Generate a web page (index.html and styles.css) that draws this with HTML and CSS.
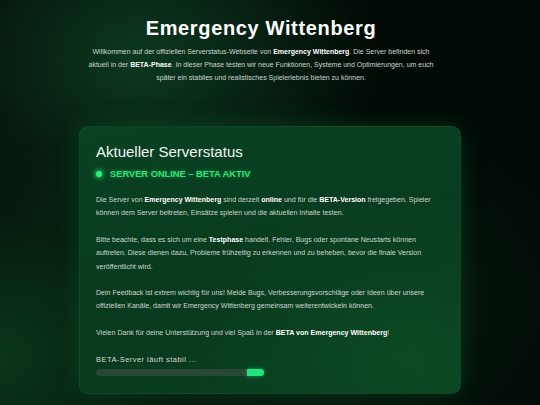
FILE: index.html
```html
<!DOCTYPE html>
<html lang="de">
<head>
<meta charset="utf-8">
<title>Emergency Wittenberg</title>
<link rel="stylesheet" href="styles.css">
</head>
<body>
<div class="page">
  <header class="hero">
    <h1 class="hero-title">Emergency Wittenberg</h1>
    <p class="hero-intro">Willkommen auf der offiziellen Serverstatus-Webseite von <b>Emergency Wittenberg</b>. Die Server befinden sich aktuell in der <b>BETA-Phase</b>. In dieser Phase testen wir neue Funktionen, Systeme und Optimierungen, um euch später ein stabiles und realistisches Spielerlebnis bieten zu können.</p>
  </header>
  <main class="card">
    <h2 class="card-title">Aktueller Serverstatus</h2>
    <div class="status"><span class="status-dot"></span><span class="status-text">SERVER ONLINE – BETA AKTIV</span></div>
    <p class="card-text">Die Server von <b>Emergency Wittenberg</b> sind derzeit <b>online</b> und für die <b>BETA-Version</b> freigegeben. Spieler können dem Server beitreten, Einsätze spielen und die aktuellen Inhalte testen.</p>
    <p class="card-text">Bitte beachte, dass es sich um eine <b>Testphase</b> handelt. Fehler, Bugs oder spontane Neustarts können auftreten. Diese dienen dazu, Probleme frühzeitig zu erkennen und zu beheben, bevor die finale Version veröffentlicht wird.</p>
    <p class="card-text">Dein Feedback ist extrem wichtig für uns! Melde Bugs, Verbesserungsvorschläge oder Ideen über unsere offiziellen Kanäle, damit wir Emergency Wittenberg gemeinsam weiterentwickeln können.</p>
    <p class="card-text">Vielen Dank für deine Unterstützung und viel Spaß in der <b>BETA von Emergency Wittenberg</b>!</p>
    <div class="progress-label">BETA-Server läuft stabil ...</div>
    <div class="progress"><div class="progress-fill"></div></div>
  </main>
</div>
</body>
</html>
```

FILE: styles.css
```css
html, body {
  margin: 0;
  padding: 0;
}
body {
  width: 540px;
  height: 405px;
  overflow: hidden;
  font-family: "Liberation Sans", Arial, sans-serif;
  color: #ffffff;
  background:
    radial-gradient(ellipse 240px 190px at 140px 60px, rgba(14, 68, 38, 0.8), rgba(14, 68, 38, 0) 100%),
    radial-gradient(ellipse 200px 220px at 0px 360px, rgba(12, 70, 34, 0.7), rgba(12, 70, 34, 0) 100%),
    radial-gradient(ellipse 320px 200px at 270px 300px, rgba(10, 60, 30, 0.55), rgba(10, 60, 30, 0) 100%),
    #020a05;
}
.page {
  display: flex;
  flex-direction: column;
  align-items: center;
}
.hero {
  display: flex;
  flex-direction: column;
  align-items: center;
  padding: 16px 18px 0 0;
  width: 522px;
  text-align: center;
}
.hero-title {
  margin: 0;
  font-size: 20px;
  line-height: 24px;
  font-weight: 700;
  letter-spacing: 0.65px;
  color: #ffffff;
}
.hero-intro {
  margin: 5px 0 0 0;
  width: 356px;
  font-size: 7px;
  line-height: 13px;
  color: #cbd5cf;
}
.hero-intro b {
  color: #ffffff;
}
.card {
  margin-top: 42px;
  width: 348px;
  padding: 16px 16px 17px 16px;
  border-radius: 9px;
  background:
    radial-gradient(ellipse 220px 160px at 330px 230px, rgba(16, 84, 42, 0.55), rgba(16, 84, 42, 0) 100%),
    linear-gradient(170deg, #0a4123 0%, #083a1d 60%, #093d1f 100%);
  box-shadow: 0 0 24px rgba(20, 120, 60, 0.3);
  border: 1px solid rgba(60, 160, 90, 0.1);
}
.card-title {
  margin: 0;
  font-size: 15px;
  line-height: 18px;
  font-weight: 400;
  color: #f2f5f3;
}
.status {
  display: flex;
  align-items: center;
  gap: 8px;
  margin-top: 7px;
  height: 12px;
}
.status-dot {
  width: 6px;
  height: 6px;
  border-radius: 50%;
  background: #2cf27a;
  box-shadow: 0 0 5px 1px rgba(44, 242, 122, 0.8);
}
.status-text {
  font-size: 9.3px;
  font-weight: 700;
  color: #2fe474;
  line-height: 12px;
  text-shadow: 0 0 4px rgba(47, 228, 116, 0.45);
}
.card-text {
  margin: 13px 0 0 0;
  font-size: 7.05px;
  line-height: 13.4px;
  color: #cdd6d1;
}
.card-text b {
  color: #ffffff;
}
.progress-label {
  margin-top: 15px;
  font-size: 7.5px;
  line-height: 12px;
  letter-spacing: 0.45px;
  color: #d2dad5;
}
.progress {
  margin-top: 3px;
  width: 168px;
  height: 7px;
  border-radius: 4px;
  background: #2a4635;
  display: flex;
  justify-content: flex-end;
}
.progress-fill {
  width: 17px;
  height: 7px;
  border-radius: 1px 4px 4px 1px;
  background: #20e57a;
  box-shadow: 0 0 4px rgba(32, 229, 122, 0.6);
}
```
